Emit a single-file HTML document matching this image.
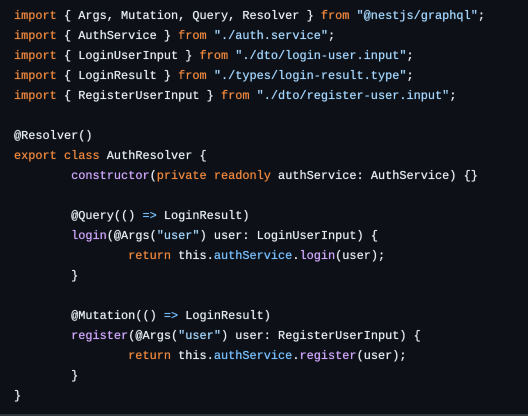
<!DOCTYPE html>
<html><head><meta charset="utf-8"><style>
html,body{margin:0;padding:0;background:#0d1117;width:528px;height:416px;overflow:hidden}
pre{margin:0;position:absolute;left:14px;top:6px;font-family:"Liberation Mono",monospace;font-size:11.9px;line-height:20px;color:#e6edf3;font-weight:normal;text-shadow:0 0 0.6px currentColor;tab-size:8;-moz-tab-size:8;white-space:pre}
.k{color:#f0883e}.s{color:#a5d6ff}.f{color:#d2a8ff}.p{color:#79c0ff}
.bar{position:absolute;left:0;right:0;bottom:0;height:2px;background:#30363d}
</style></head><body>
<pre><span class="k">import</span> { Args, Mutation, Query, Resolver } <span class="k">from</span> <span class="s">"@nestjs/graphql"</span>;
<span class="k">import</span> { AuthService } <span class="k">from</span> <span class="s">"./auth.service"</span>;
<span class="k">import</span> { LoginUserInput } <span class="k">from</span> <span class="s">"./dto/login-user.input"</span>;
<span class="k">import</span> { LoginResult } <span class="k">from</span> <span class="s">"./types/login-result.type"</span>;
<span class="k">import</span> { RegisterUserInput } <span class="k">from</span> <span class="s">"./dto/register-user.input"</span>;

@Resolver()
<span class="k">export</span> <span class="k">class</span> AuthResolver {
	<span class="f">constructor</span>(<span class="k">private</span> <span class="k">readonly</span> authService: AuthService) {}

	@Query(() <span class="p">=&gt;</span> LoginResult)
	<span class="f">login</span>(@Args(<span class="s">"user"</span>) user: LoginUserInput) {
		<span class="k">return</span> this.<span class="p">authService</span>.<span class="f">login</span>(user);
	}

	@Mutation(() <span class="p">=&gt;</span> LoginResult)
	<span class="f">register</span>(@Args(<span class="s">"user"</span>) user: RegisterUserInput) {
		<span class="k">return</span> this.<span class="p">authService</span>.<span class="f">register</span>(user);
	}
}</pre>
<div class="bar"></div>
</body></html>
